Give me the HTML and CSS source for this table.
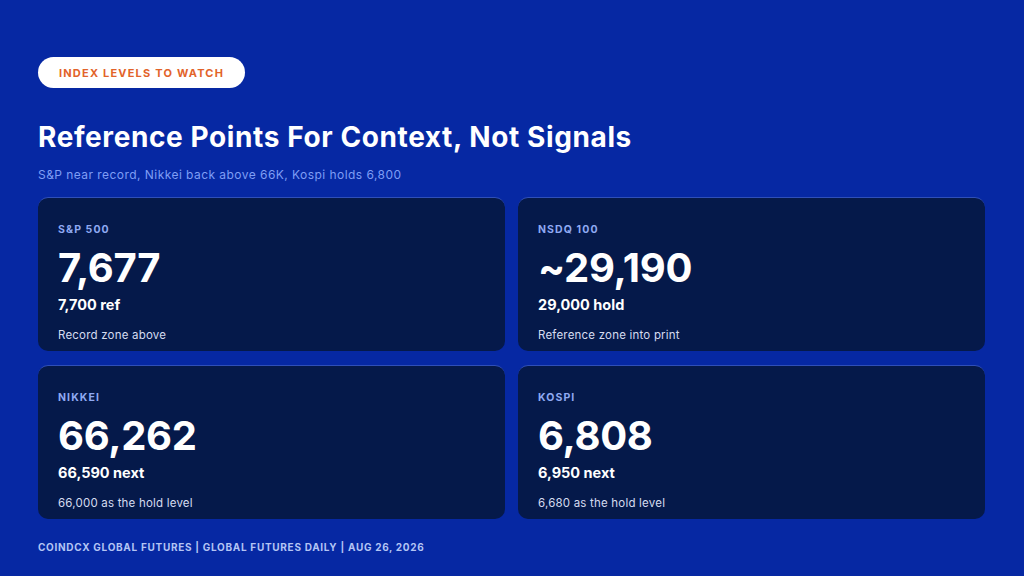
FILE: index.html
```html
<!DOCTYPE html>
<html lang="en">
<head>
<meta charset="utf-8">
<title>Index Levels To Watch</title>
<link rel="stylesheet" href="styles.css">
</head>
<body>
<main class="slide">
  <header class="head">
    <span class="pill">INDEX LEVELS TO WATCH</span>
    <h1 class="title">Reference Points For Context, Not Signals</h1>
    <p class="subtitle">S&amp;P near record, Nikkei back above 66K, Kospi holds 6,800</p>
  </header>
  <section class="grid">
    <article class="card">
      <div class="label">S&amp;P 500</div>
      <div class="value">7,677</div>
      <div class="level">7,700 ref</div>
      <div class="note">Record zone above</div>
    </article>
    <article class="card">
      <div class="label">NSDQ 100</div>
      <div class="value">~29,190</div>
      <div class="level">29,000 hold</div>
      <div class="note">Reference zone into print</div>
    </article>
    <article class="card">
      <div class="label">NIKKEI</div>
      <div class="value">66,262</div>
      <div class="level">66,590 next</div>
      <div class="note">66,000 as the hold level</div>
    </article>
    <article class="card">
      <div class="label">KOSPI</div>
      <div class="value">6,808</div>
      <div class="level">6,950 next</div>
      <div class="note">6,680 as the hold level</div>
    </article>
  </section>
  <footer class="foot">COINDCX GLOBAL FUTURES | GLOBAL FUTURES DAILY | AUG 26, 2026</footer>
</main>
</body>
</html>
```
FILE: styles.css
```css
* { box-sizing: border-box; }
html, body { margin: 0; padding: 0; }
body {
  width: 1024px;
  height: 576px;
  overflow: hidden;
  background: #0628a3;
  font-family: "Inter", "Noto Sans", "Liberation Sans", sans-serif;
  color: #ffffff;
}
.slide {
  height: 576px;
  padding: 57px 39px 0 38px;
  display: flex;
  flex-direction: column;
}
.head {
  display: flex;
  flex-direction: column;
  align-items: flex-start;
}
.pill {
  display: inline-flex;
  align-items: center;
  height: 31px;
  padding: 0 21px;
  border-radius: 16px;
  background: #ffffff;
  color: #e2632a;
  font-size: 11px;
  font-weight: 700;
  letter-spacing: 1.2px;
}
.title {
  margin: 31px 0 0;
  font-size: 28px;
  line-height: 36px;
  font-weight: 700;
  letter-spacing: 0.6px;
}
.subtitle {
  margin: 12px 0 0;
  font-size: 12px;
  line-height: 16px;
  color: #7f9ef5;
  letter-spacing: 0.45px;
}
.grid {
  margin-top: 14px;
  display: grid;
  grid-template-columns: 1fr 1fr;
  grid-template-rows: 154px 154px;
  column-gap: 13px;
  row-gap: 14px;
}
.card {
  background: #05194a;
  border-radius: 10px;
  border-top: 1px solid #2f4fb8;
  padding: 25px 20px 0;
  display: flex;
  flex-direction: column;
}
.label {
  font-size: 10.5px;
  line-height: 14px;
  font-weight: 700;
  letter-spacing: 1.1px;
  color: #8fa9f2;
}
.value {
  margin-top: 7px;
  font-size: 40px;
  line-height: 48px;
  font-weight: 700;
  letter-spacing: -0.3px;
}
.level {
  margin-top: 3px;
  font-size: 14.5px;
  line-height: 20px;
  font-weight: 700;
}
.note {
  margin-top: 12px;
  font-size: 11.5px;
  line-height: 16px;
  color: #d5dcf0;
  letter-spacing: 0.2px;
}
.foot {
  margin-top: 21px;
  font-size: 10px;
  line-height: 14px;
  font-weight: 700;
  letter-spacing: 0.7px;
  color: #b3c4f4;
}
```
